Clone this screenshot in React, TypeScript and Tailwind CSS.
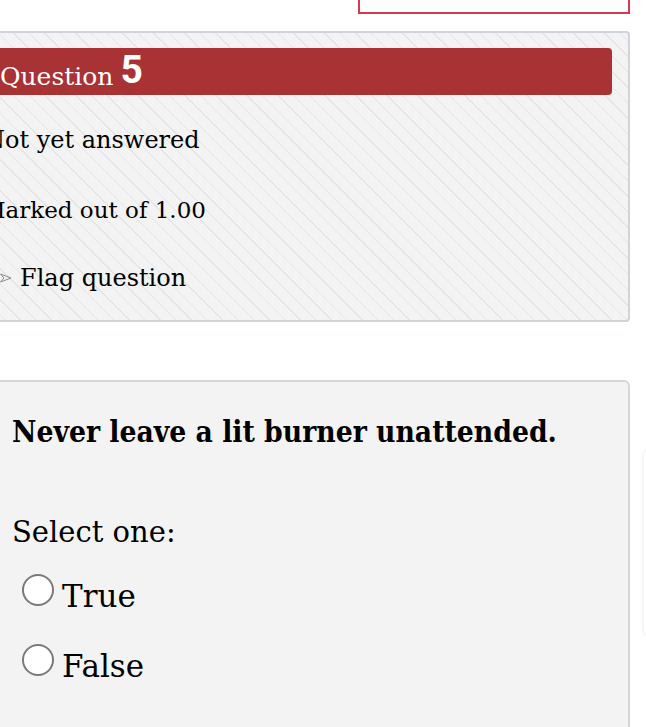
const serif = { fontFamily: "'Roboto Slab', 'DejaVu Serif', serif" };
const serifBold = { fontFamily: "'Roboto Slab', 'DejaVu Serif Condensed', 'DejaVu Serif', serif" };

function FlagIcon() {
  return (
    <svg width="12" height="10" viewBox="0 0 12 10" className="shrink-0">
      <path d="M0.5 1 L11 5 L0.5 9 L4 5 Z" fill="none" stroke="#8a8a8a" strokeWidth="1" />
    </svg>
  );
}

function Radio() {
  return <span className="w-[32px] h-[32px] rounded-full border-2 border-[#7a7a7a] bg-white shrink-0" />;
}

export default function App() {
  return (
    <div className="relative w-[646px] h-[727px] bg-white overflow-hidden text-black" style={serif}>
      {/* top outlined box, cut by the page edge */}
      <div className="ml-[358px] w-[272px] h-[14px] border-2 border-t-0 border-[#d33a4c]" />

      {/* question info */}
      <div className="mt-[17px] ml-[-12px] w-[642px] h-[291px] border-2 border-[#cfd3da] rounded-[4px] bg-[#f3f3f3] bg-[repeating-linear-gradient(45deg,transparent_0px,transparent_10px,#e4e4e4_10px,#e4e4e4_11px)]">
        <div className="mt-[15px] w-[622px] h-[47px] bg-[#a83234] rounded-r-[4px] flex items-end pb-[6px] pl-[10px] text-white">
          <span className="text-[25px] leading-none">Question</span>
          <span className="ml-[7px] mb-[-1px] text-[39px] leading-none font-bold" style={{ fontFamily: 'Roboto, sans-serif' }}>5</span>
        </div>
        <div className="text-[24px] leading-none">
          <div className="mt-[33px] ml-[-6px]">Not yet answered</div>
          <div className="mt-[46px] ml-[-8px] text-[23px] pt-[1px]">Marked out of 1.00</div>
          <div className="mt-[44px] flex items-center gap-[8px] ml-[10px]">
            <FlagIcon />
            <span>Flag question</span>
          </div>
        </div>
      </div>

      {/* question text */}
      <div className="mt-[58px] ml-[-12px] w-[642px] h-[400px] border-2 border-[#d6d6d6] rounded-[6px] bg-[#f3f3f3] pl-[22px]">
        <div className="mt-[35px] text-[29.7px] font-bold leading-none" style={serifBold}>
          Never leave a lit burner unattended.
        </div>
        <div className="mt-[71px] text-[29px] leading-none">Select one:</div>
        <div className="mt-[27px] ml-[10px] flex items-start gap-[8px]">
          <Radio />
          <span className="text-[31px] leading-none mt-[7px]">True</span>
        </div>
        <div className="mt-[32px] ml-[10px] flex items-start gap-[8px]">
          <Radio />
          <span className="text-[31px] leading-none mt-[7px]">False</span>
        </div>
      </div>

      {/* edge of a panel beyond the right side */}
      <div className="absolute left-[644px] top-[450px] w-[20px] h-[186px] rounded-l-[6px] bg-white shadow-[0_0_4px_rgba(0,0,0,0.1)]" />
    </div>
  );
}
